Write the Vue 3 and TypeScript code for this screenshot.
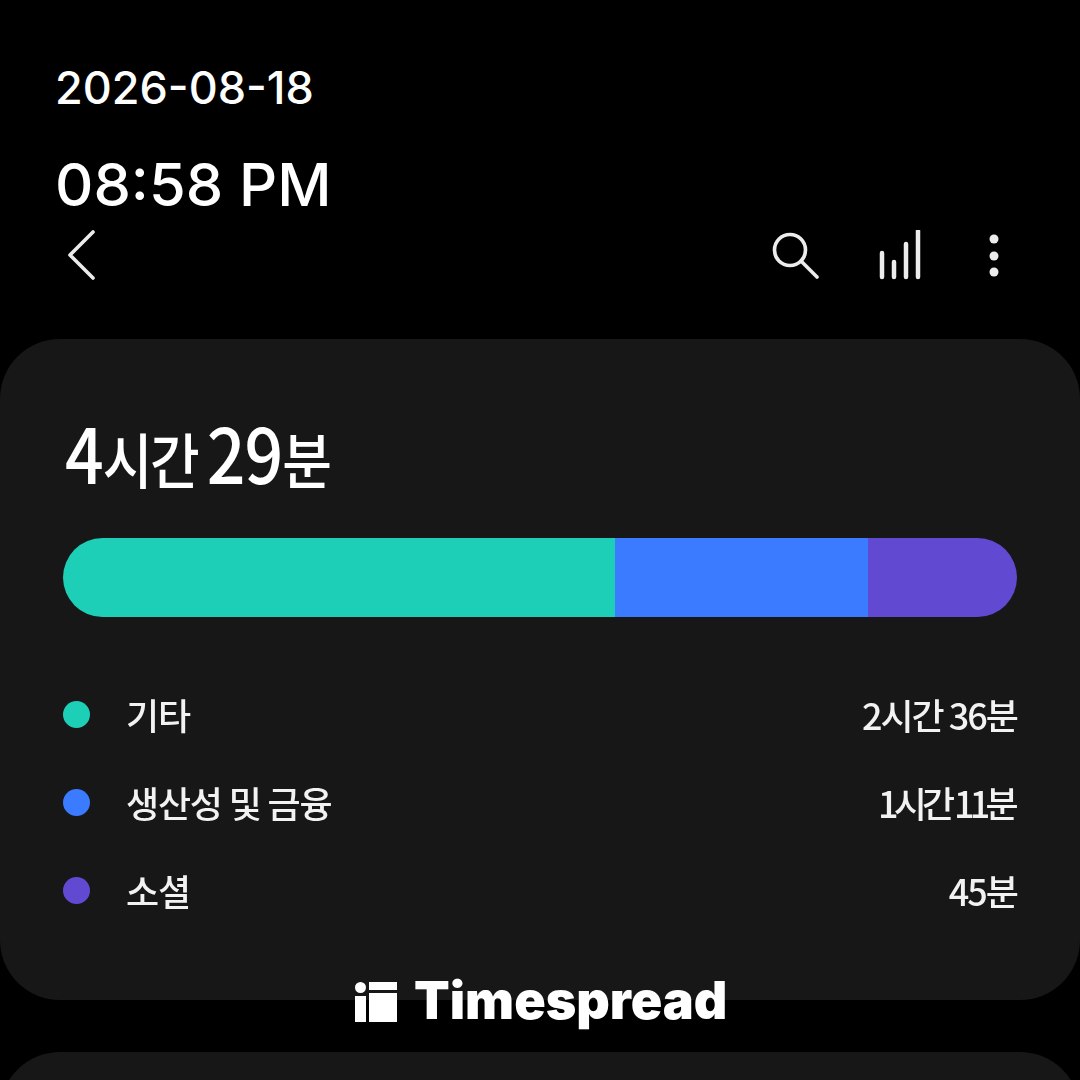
<script setup lang="ts">
interface Usage {
  label: string
  time: string
  color: string
  width: number
  tight?: boolean
}

const usages: Usage[] = [
  { label: '기타', time: '2시간 36분', color: '#1ecfb8', width: 552 },
  { label: '생산성 및 금융', time: '1시간 11분', color: '#3a7bff', width: 253, tight: true },
  { label: '소셜', time: '45분', color: '#6249d1', width: 149 },
]
</script>

<template>
  <div class="page">
    <div class="clock">
      <div class="date">2026-08-18</div>
      <div class="time">08:58 PM</div>
    </div>

    <div class="toolbar">
      <svg class="back" width="30" height="50" viewBox="0 0 30 50">
        <path d="M26 2 L3 25 L26 48" />
      </svg>
      <div class="actions">
        <svg width="50" height="50" viewBox="0 0 50 50">
          <circle cx="20" cy="20" r="15.5" />
          <path d="M31 31 L47 47" />
        </svg>
        <svg class="bars" width="44" height="50" viewBox="0 0 44 50">
          <path d="M4 23 V47 M16 32 V47 M28 14 V47 M40 1 V47" />
        </svg>
        <svg width="14" height="46" viewBox="0 0 14 46">
          <circle class="dot" cx="7" cy="7" r="4.5" />
          <circle class="dot" cx="7" cy="24" r="4.5" />
          <circle class="dot" cx="7" cy="40" r="4.5" />
        </svg>
      </div>
    </div>

    <section class="card">
      <h1 class="total"><b>4</b>시간 <b>29</b>분</h1>
      <div class="bar">
        <span
          v-for="u in usages"
          :key="u.label"
          :style="{ width: u.width + 'px', background: u.color }"
        />
      </div>
      <ul class="legend">
        <li v-for="u in usages" :key="u.label">
          <i :style="{ background: u.color }" />
          <span class="label">{{ u.label }}</span>
          <span class="value" :class="{ tight: u.tight }">{{ u.time }}</span>
        </li>
      </ul>
    </section>

    <section class="card next" />

    <div class="brand">
      <svg width="42" height="40" viewBox="0 0 42 40">
        <circle cx="5.5" cy="5.5" r="5.5" />
        <rect x="0" y="14" width="11" height="26" />
        <rect x="14" y="0" width="28" height="8" />
        <rect x="14" y="11" width="28" height="29" />
      </svg>
      <span>Timespread</span>
    </div>
  </div>
</template>

<style scoped>
.page {
  position: relative;
  width: 1080px;
  height: 1080px;
  overflow: hidden;
  background: #000;
  color: #fff;
  font-family: Inter, "Noto Sans CJK KR", sans-serif;
}

.clock {
  padding: 60px 0 0 55px;
}

.date {
  font-size: 45px;
  font-weight: 500;
  line-height: 56px;
}

.time {
  margin-top: 32px;
  font-size: 59.5px;
  font-weight: 500;
  line-height: 72px;
}

.toolbar {
  display: flex;
  align-items: center;
  justify-content: space-between;
  height: 50px;
  margin-top: 10px;
  padding: 0 79px 0 67px;
}

.toolbar svg {
  fill: none;
  stroke: #ececec;
  stroke-width: 3.6;
  stroke-linecap: round;
  stroke-linejoin: round;
  filter: blur(0.5px);
}

.toolbar .bars {
  stroke-width: 4.5;
  margin-left: 58px;
}

.toolbar .dot {
  fill: #ececec;
  stroke: none;
}

.actions {
  display: flex;
  align-items: center;
  gap: 65px;
}

.actions svg:nth-child(2) {
  margin-left: -7px;
}

.card {
  height: 661px;
  margin-top: 59px;
  padding: 73px 63px 0;
  box-sizing: border-box;
  border-radius: 60px;
  background: #171717;
  font-family: "Noto Sans CJK KR", sans-serif;
}

.next {
  margin-top: 52px;
}

.total {
  height: 84px;
  margin: 0;
  padding-left: 2px;
  font-size: 54px;
  font-weight: 500;
  line-height: 84px;
  letter-spacing: -2.5px;
  filter: blur(0.6px);
  transform: scaleY(1.12);
  transform-origin: 0 76%;
}

.total b {
  font-size: 68px;
  font-weight: 500;
  letter-spacing: -1px;
}

.bar {
  display: flex;
  height: 79px;
  margin-top: 42px;
  overflow: hidden;
  border-radius: 40px;
}

.legend {
  margin: 53px 0 0;
  padding: 0;
  list-style: none;
}

.legend li {
  display: flex;
  align-items: center;
  height: 88px;
  font-size: 36px;
  font-weight: 500;
  color: #f2f2f2;
}

.legend i {
  width: 27px;
  height: 27px;
  border-radius: 50%;
  margin-right: 36px;
}

.label,
.value {
  letter-spacing: -1.2px;
  filter: blur(0.5px);
}

.value {
  margin-left: auto;
  letter-spacing: -2px;
}

.value.tight {
  letter-spacing: -4.7px;
  margin-right: 3px;
}

.brand {
  position: absolute;
  left: 355px;
  top: 972px;
  display: flex;
  align-items: center;
  gap: 17px;
  height: 60px;
  font-size: 52px;
  font-weight: 900;
}

.brand span {
  margin-top: -3px;
}

.brand svg {
  fill: #fff;
}
</style>
